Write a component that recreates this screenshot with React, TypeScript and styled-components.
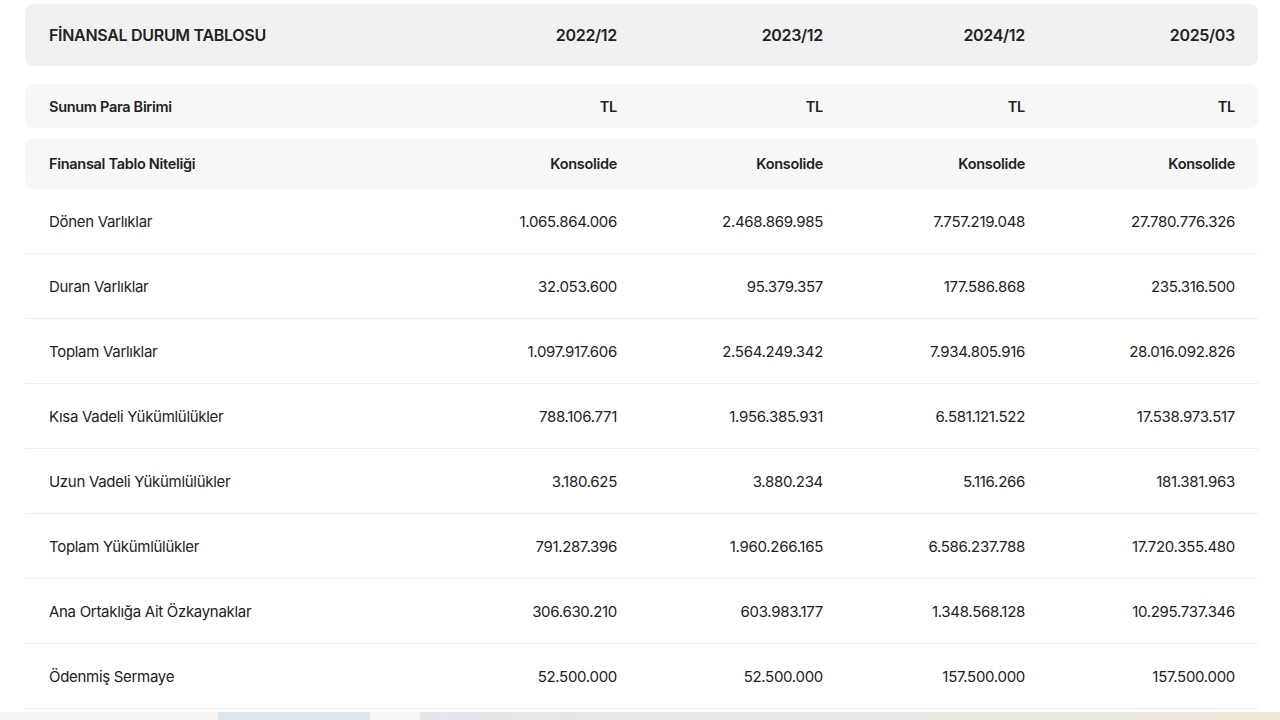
import React from "react";
import styled, { createGlobalStyle } from "styled-components";

const Global = createGlobalStyle`
  html, body { margin: 0; background: #fff; }
  * { box-sizing: border-box; }
  body { font-family: Inter, "Open Sans", sans-serif; color: #222; }
`;

const Page = styled.div`
  height: 720px;
  display: flex;
  flex-direction: column;
  overflow: hidden;
`;

const Table = styled.div`
  padding: 4px 22px 0 25px;
  flex: 1;
`;

const Row = styled.div<{ $variant?: "head" | "meta" | "meta2" | "data"; $gap?: number }>`
  display: grid;
  grid-template-columns: 1fr 206px 206px 202px 210px;
  align-items: center;
  margin-top: ${(p) => p.$gap ?? 0}px;
  height: ${(p) =>
    p.$variant === "head" ? 62 : p.$variant === "meta" ? 44 : p.$variant === "meta2" ? 51 : 65}px;
  background: ${(p) =>
    p.$variant === "head" ? "#f1f1f1" : p.$variant === "data" ? "#fff" : "#f7f7f7"};
  border-bottom: ${(p) => (p.$variant === "data" ? "1px solid #efefef" : "none")};
  border-radius: ${(p) => (p.$variant === "data" ? 0 : 8)}px;
  font-size: ${(p) => (p.$variant === "head" ? 16 : p.$variant === "data" ? 15 : 14.5)}px;
  font-weight: ${(p) => (p.$variant === "data" ? 400 : 600)};
  letter-spacing: -0.3px;
`;

const Label = styled.div`
  padding-left: 24px;
`;

const Cell = styled.div`
  text-align: right;
  padding-right: 23px;
`;

const Footer = styled.div`
  height: 8px;
  background: linear-gradient(90deg, #f4f4f4 0 218px, #dfe6ee 218px 370px, #f6f6f6 370px 420px, #e3e8ef 420px, #efe8d8);
`;

const data: [string, string[]][] = [
  ["Dönen Varlıklar", ["1.065.864.006", "2.468.869.985", "7.757.219.048", "27.780.776.326"]],
  ["Duran Varlıklar", ["32.053.600", "95.379.357", "177.586.868", "235.316.500"]],
  ["Toplam Varlıklar", ["1.097.917.606", "2.564.249.342", "7.934.805.916", "28.016.092.826"]],
  ["Kısa Vadeli Yükümlülükler", ["788.106.771", "1.956.385.931", "6.581.121.522", "17.538.973.517"]],
  ["Uzun Vadeli Yükümlülükler", ["3.180.625", "3.880.234", "5.116.266", "181.381.963"]],
  ["Toplam Yükümlülükler", ["791.287.396", "1.960.266.165", "6.586.237.788", "17.720.355.480"]],
  ["Ana Ortaklığa Ait Özkaynaklar", ["306.630.210", "603.983.177", "1.348.568.128", "10.295.737.346"]],
  ["Ödenmiş Sermaye", ["52.500.000", "52.500.000", "157.500.000", "157.500.000"]],
];

export default function App() {
  return (
    <Page>
      <Global />
      <Table>
        <Row $variant="head">
          <Label>FİNANSAL DURUM TABLOSU</Label>
          {["2022/12", "2023/12", "2024/12", "2025/03"].map((y) => (
            <Cell key={y}>{y}</Cell>
          ))}
        </Row>
        <Row $variant="meta" $gap={18}>
          <Label>Sunum Para Birimi</Label>
          {[0, 1, 2, 3].map((i) => (
            <Cell key={i}>TL</Cell>
          ))}
        </Row>
        <Row $variant="meta2" $gap={10}>
          <Label>Finansal Tablo Niteliği</Label>
          {[0, 1, 2, 3].map((i) => (
            <Cell key={i}>Konsolide</Cell>
          ))}
        </Row>
        {data.map(([label, vals]) => (
          <Row key={label} $variant="data">
            <Label>{label}</Label>
            {vals.map((v, i) => (
              <Cell key={i}>{v}</Cell>
            ))}
          </Row>
        ))}
      </Table>
      <Footer />
    </Page>
  );
}
